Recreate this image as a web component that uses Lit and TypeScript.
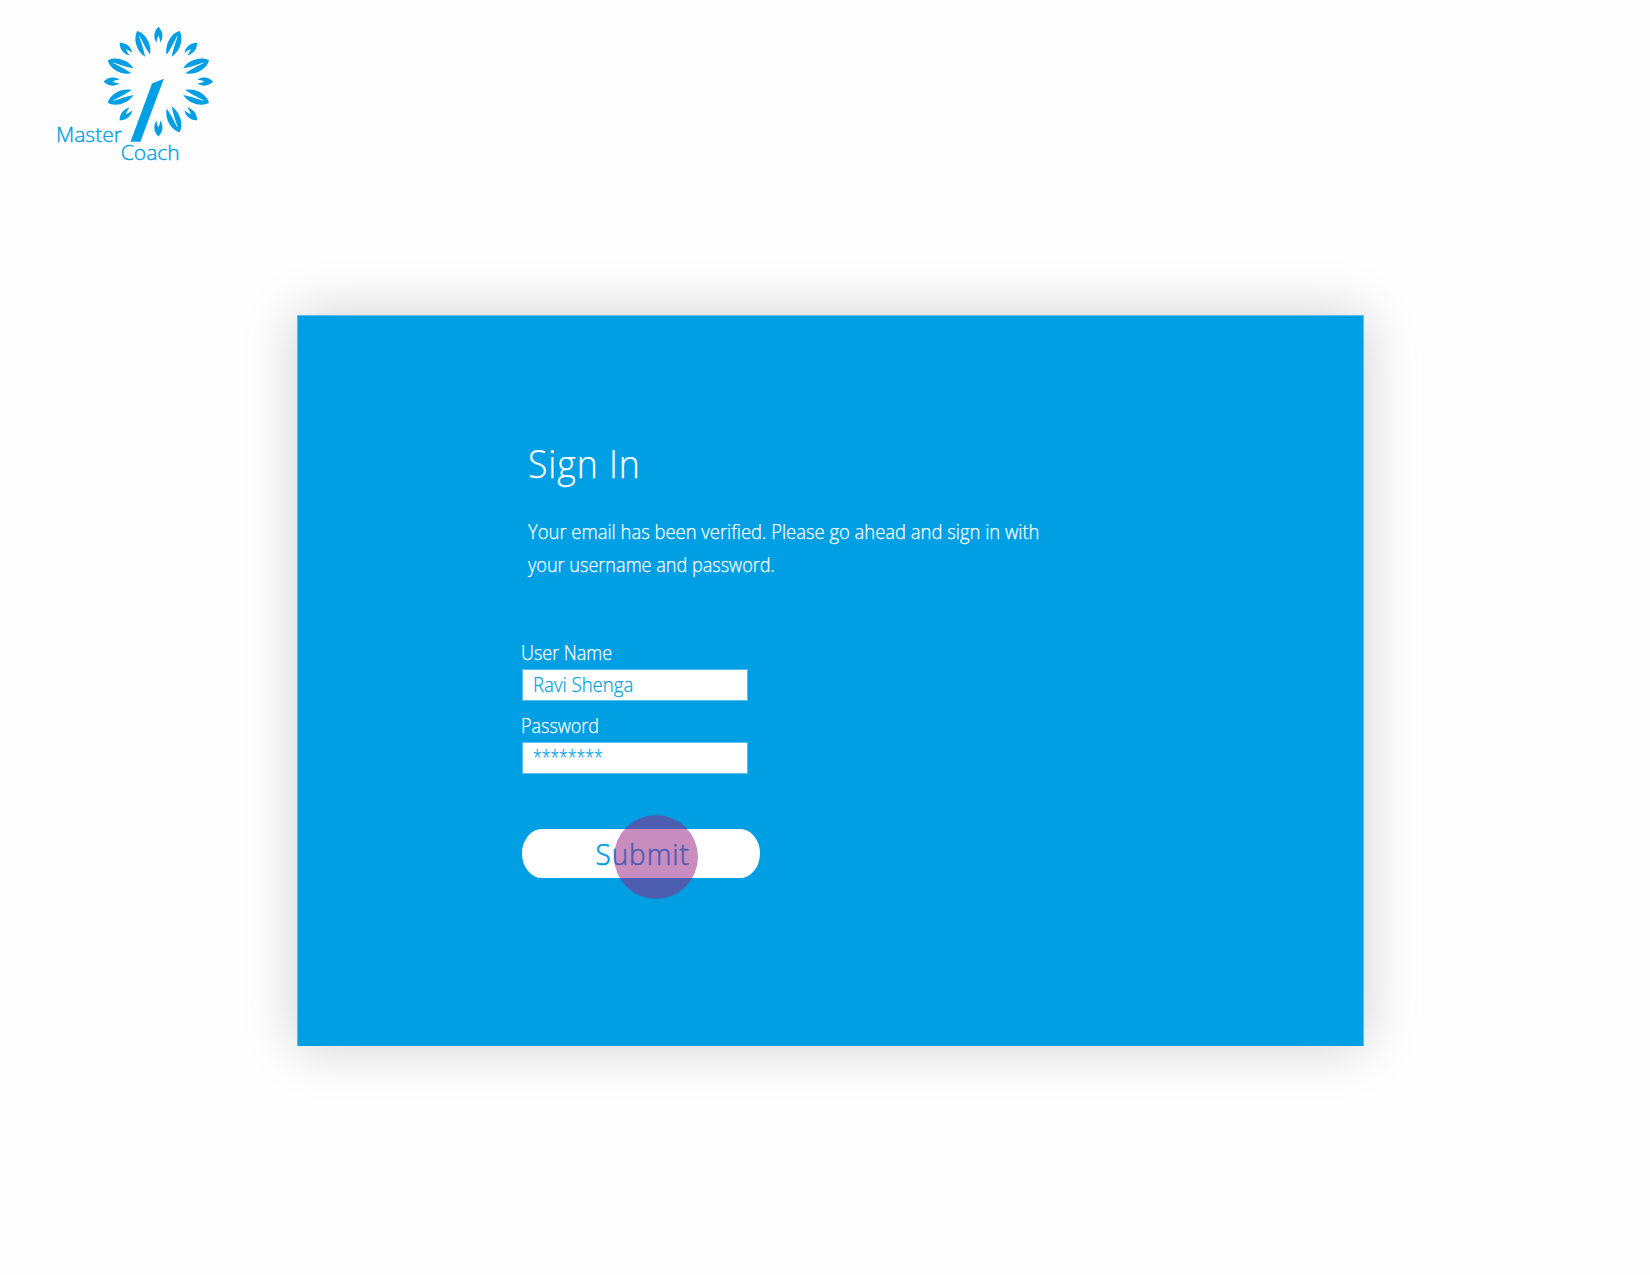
import { LitElement, html, svg, css } from "lit";
import { customElement } from "lit/decorators.js";

const LARGE_LEAF =
  "M0 -54.9 C-6.6 -50 -8.8 -37 -2.7 -28 Q-1 -36 -0.3 -49 L0.3 -49 Q1 -36 2.7 -28 C8.8 -37 6.6 -50 0 -54.9 Z";
const SMALL_LEAF =
  "M0 -54.8 C-2.8 -51.8 -6.4 -46.5 -2 -38.8 Q-1.3 -43.4 0 -46 Q1.3 -43.4 2 -38.8 C6.4 -46.5 2.8 -51.8 0 -54.8 Z";

const SMALL_ANGLES = [0, 45, 90, 135, 180, 225, 270, 315];
const LARGE_ANGLES = [22.7, 67.3, 112.7, 157.3, 247.3, 292.7, 337.3];

@customElement("brand-logo")
export class BrandLogo extends LitElement {
  static styles = css`
    :host { display: block; width: 180px; height: 160px; }
    .art { display: block; width: 180px; height: 160px; overflow: visible; fill: #009fe3; }
    .name { font: 300 20px "Open Sans", sans-serif; stroke: #009fe3; stroke-width: 0.35; }
  `;

  render() {
    return html`
      <svg class="art" viewBox="50 10 180 160" role="img" aria-label="Master Coach">
        <g transform="translate(158.4 81.6)">
          ${SMALL_ANGLES.map((a) => svg`<path d=${SMALL_LEAF} transform="rotate(${a})"></path>`)}
          ${LARGE_ANGLES.map((a) => svg`<path d=${LARGE_LEAF} transform="rotate(${a})"></path>`)}
        </g>
        <path d="M152 83.4 L163.8 78.8 L140.4 141.8 L130.5 141.8 Z"></path>
        <text class="name" x="56" y="142" textLength="66" lengthAdjust="spacingAndGlyphs">Master</text>
        <text class="name" x="120.8" y="160" textLength="59" lengthAdjust="spacingAndGlyphs">Coach</text>
      </svg>
    `;
  }
}

@customElement("app-root")
export class AppRoot extends LitElement {
  static styles = css`
    :host {
      display: block;
      box-sizing: border-box;
      width: 1650px;
      height: 1275px;
      padding: 10px 0 0 50px;
      overflow: hidden;
      background: #fefefe;
      font-family: "Open Sans", sans-serif;
      font-weight: 300;
      color: #fff;
      -webkit-text-stroke: 0.25px currentColor;
    }
    * { box-sizing: border-box; }
    .panel {
      margin: 145px 0 0 247px;
      width: 1067px;
      height: 731px;
      padding: 121px 0 0 224px;
      background: #009fe3;
      border: 1px solid #62bbe4;
      border-bottom: 0;
      box-shadow: 0 0 52px rgba(0, 0, 0, 0.19);
    }
    .title, .text { margin: 0; padding-left: 5.5px; white-space: nowrap; }
    .title { font-size: 38px; font-weight: 300; line-height: 52px; }
    .text { padding-top: 26px; font-size: 20.5px; line-height: 33px; }
    .fit { display: inline-block; transform-origin: 0 50%; transform: scaleX(0.898); }
    .text .last { transform: scaleX(0.882); }
    .title .fit { letter-spacing: 1px; transform: scaleX(0.937); }
    .form { display: flex; flex-direction: column; align-items: flex-start; padding-top: 55px; }
    .label { height: 33px; margin-left: -1px; padding-top: 1px; font-size: 20px; line-height: 32px; white-space: nowrap; }
    .field {
      width: 226px;
      height: 32px;
      margin: 0 0 8px;
      padding: 0 0 0 10px;
      font: 300 20px/30px "Open Sans", sans-serif;
      color: #009fe3;
      background: #fff;
      border: 1px solid #59c0ec;
    }
    .field .fit { transform: scaleX(0.93); }
    .field.secret { line-height: 28px; }
    .field.secret .fit { transform: scaleX(0.79); }
    .action { position: relative; margin-top: 47px; }
    .submit {
      display: block;
      width: 238px;
      height: 49px;
      padding: 0 0 0 3px;
      border: 0;
      border-radius: 20px / 24.5px;
      background: #fff;
      color: #009fe3;
      font: 300 30px/49px "Open Sans", sans-serif;
      letter-spacing: 1px;
      -webkit-text-stroke: 0.6px currentColor;
    }
    .submit .fit { transform-origin: 50% 50%; transform: scaleX(0.93); }
    .tap {
      position: absolute;
      left: 92px;
      top: -14px;
      width: 84px;
      height: 84px;
      border-radius: 50%;
      background: rgba(149, 33, 131, 0.518);
    }
  `;

  render() {
    return html`
      <brand-logo></brand-logo>
      <main class="panel">
        <h1 class="title"><span class="fit">Sign In</span></h1>
        <p class="text">
          <span class="fit">Your email has been verified. Please go ahead and sign in with</span><br />
          <span class="fit last">your username and password.</span>
        </p>
        <form class="form">
          <label class="label"><span class="fit">User Name</span></label>
          <div class="field"><span class="fit">Ravi Shenga</span></div>
          <label class="label"><span class="fit">Password</span></label>
          <div class="field secret"><span class="fit">********</span></div>
          <div class="action">
            <button class="submit" type="button"><span class="fit">Submit</span></button>
            <span class="tap"></span>
          </div>
        </form>
      </main>
    `;
  }
}
